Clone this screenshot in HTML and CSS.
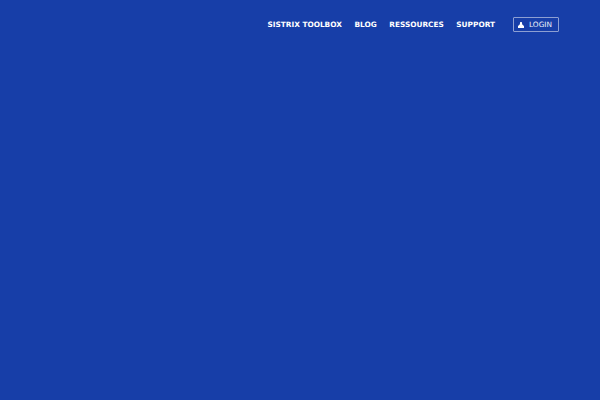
FILE: index.html
```html
<!DOCTYPE html>
<html lang="de">
<head>
<meta charset="utf-8">
<title>SISTRIX</title>
<link rel="stylesheet" href="styles.css">
</head>
<body>
<header class="header">
  <nav class="nav">
    <a class="nav-link" href="#">SISTRIX Toolbox</a>
    <a class="nav-link" href="#">Blog</a>
    <a class="nav-link" href="#">Ressources</a>
    <a class="nav-link nav-link-last" href="#">Support</a>
    <a class="login" href="#">
      <svg class="login-icon" viewBox="0 0 7 7" width="6" height="6" aria-hidden="true"><path d="M2.600 0h1.800l.6 3 2 1.600V7H0V4.600l2-1.600z" fill="#fff"/></svg>
      Login
    </a>
  </nav>
</header>
</body>
</html>
```
FILE: styles.css
```css
html, body {
  margin: 0;
  height: 100%;
}
body {
  background: #173ea8;
  font-family: "DejaVu Sans", sans-serif;
  overflow: hidden;
}
.header {
  display: flex;
  justify-content: flex-end;
  padding: 17px 41px 0 0;
}
.nav {
  display: flex;
  align-items: center;
}
.nav-link {
  margin-right: 12.500px;
  color: #fff;
  font-size: 7.360px;
  font-weight: 700;
  text-decoration: none;
  text-transform: uppercase;
}
.nav-link-last {
  margin-right: 18px;
}
.login {
  display: flex;
  align-items: center;
  gap: 5px;
  box-sizing: border-box;
  width: 46px;
  height: 15px;
  padding: 0 0 0 4px;
  border: 1px solid #8d9fd2;
  border-radius: 1px;
  color: #eef1fa;
  font-size: 7.360px;
  text-decoration: none;
  text-transform: uppercase;
}
.login-icon {
  flex: none;
}
```
